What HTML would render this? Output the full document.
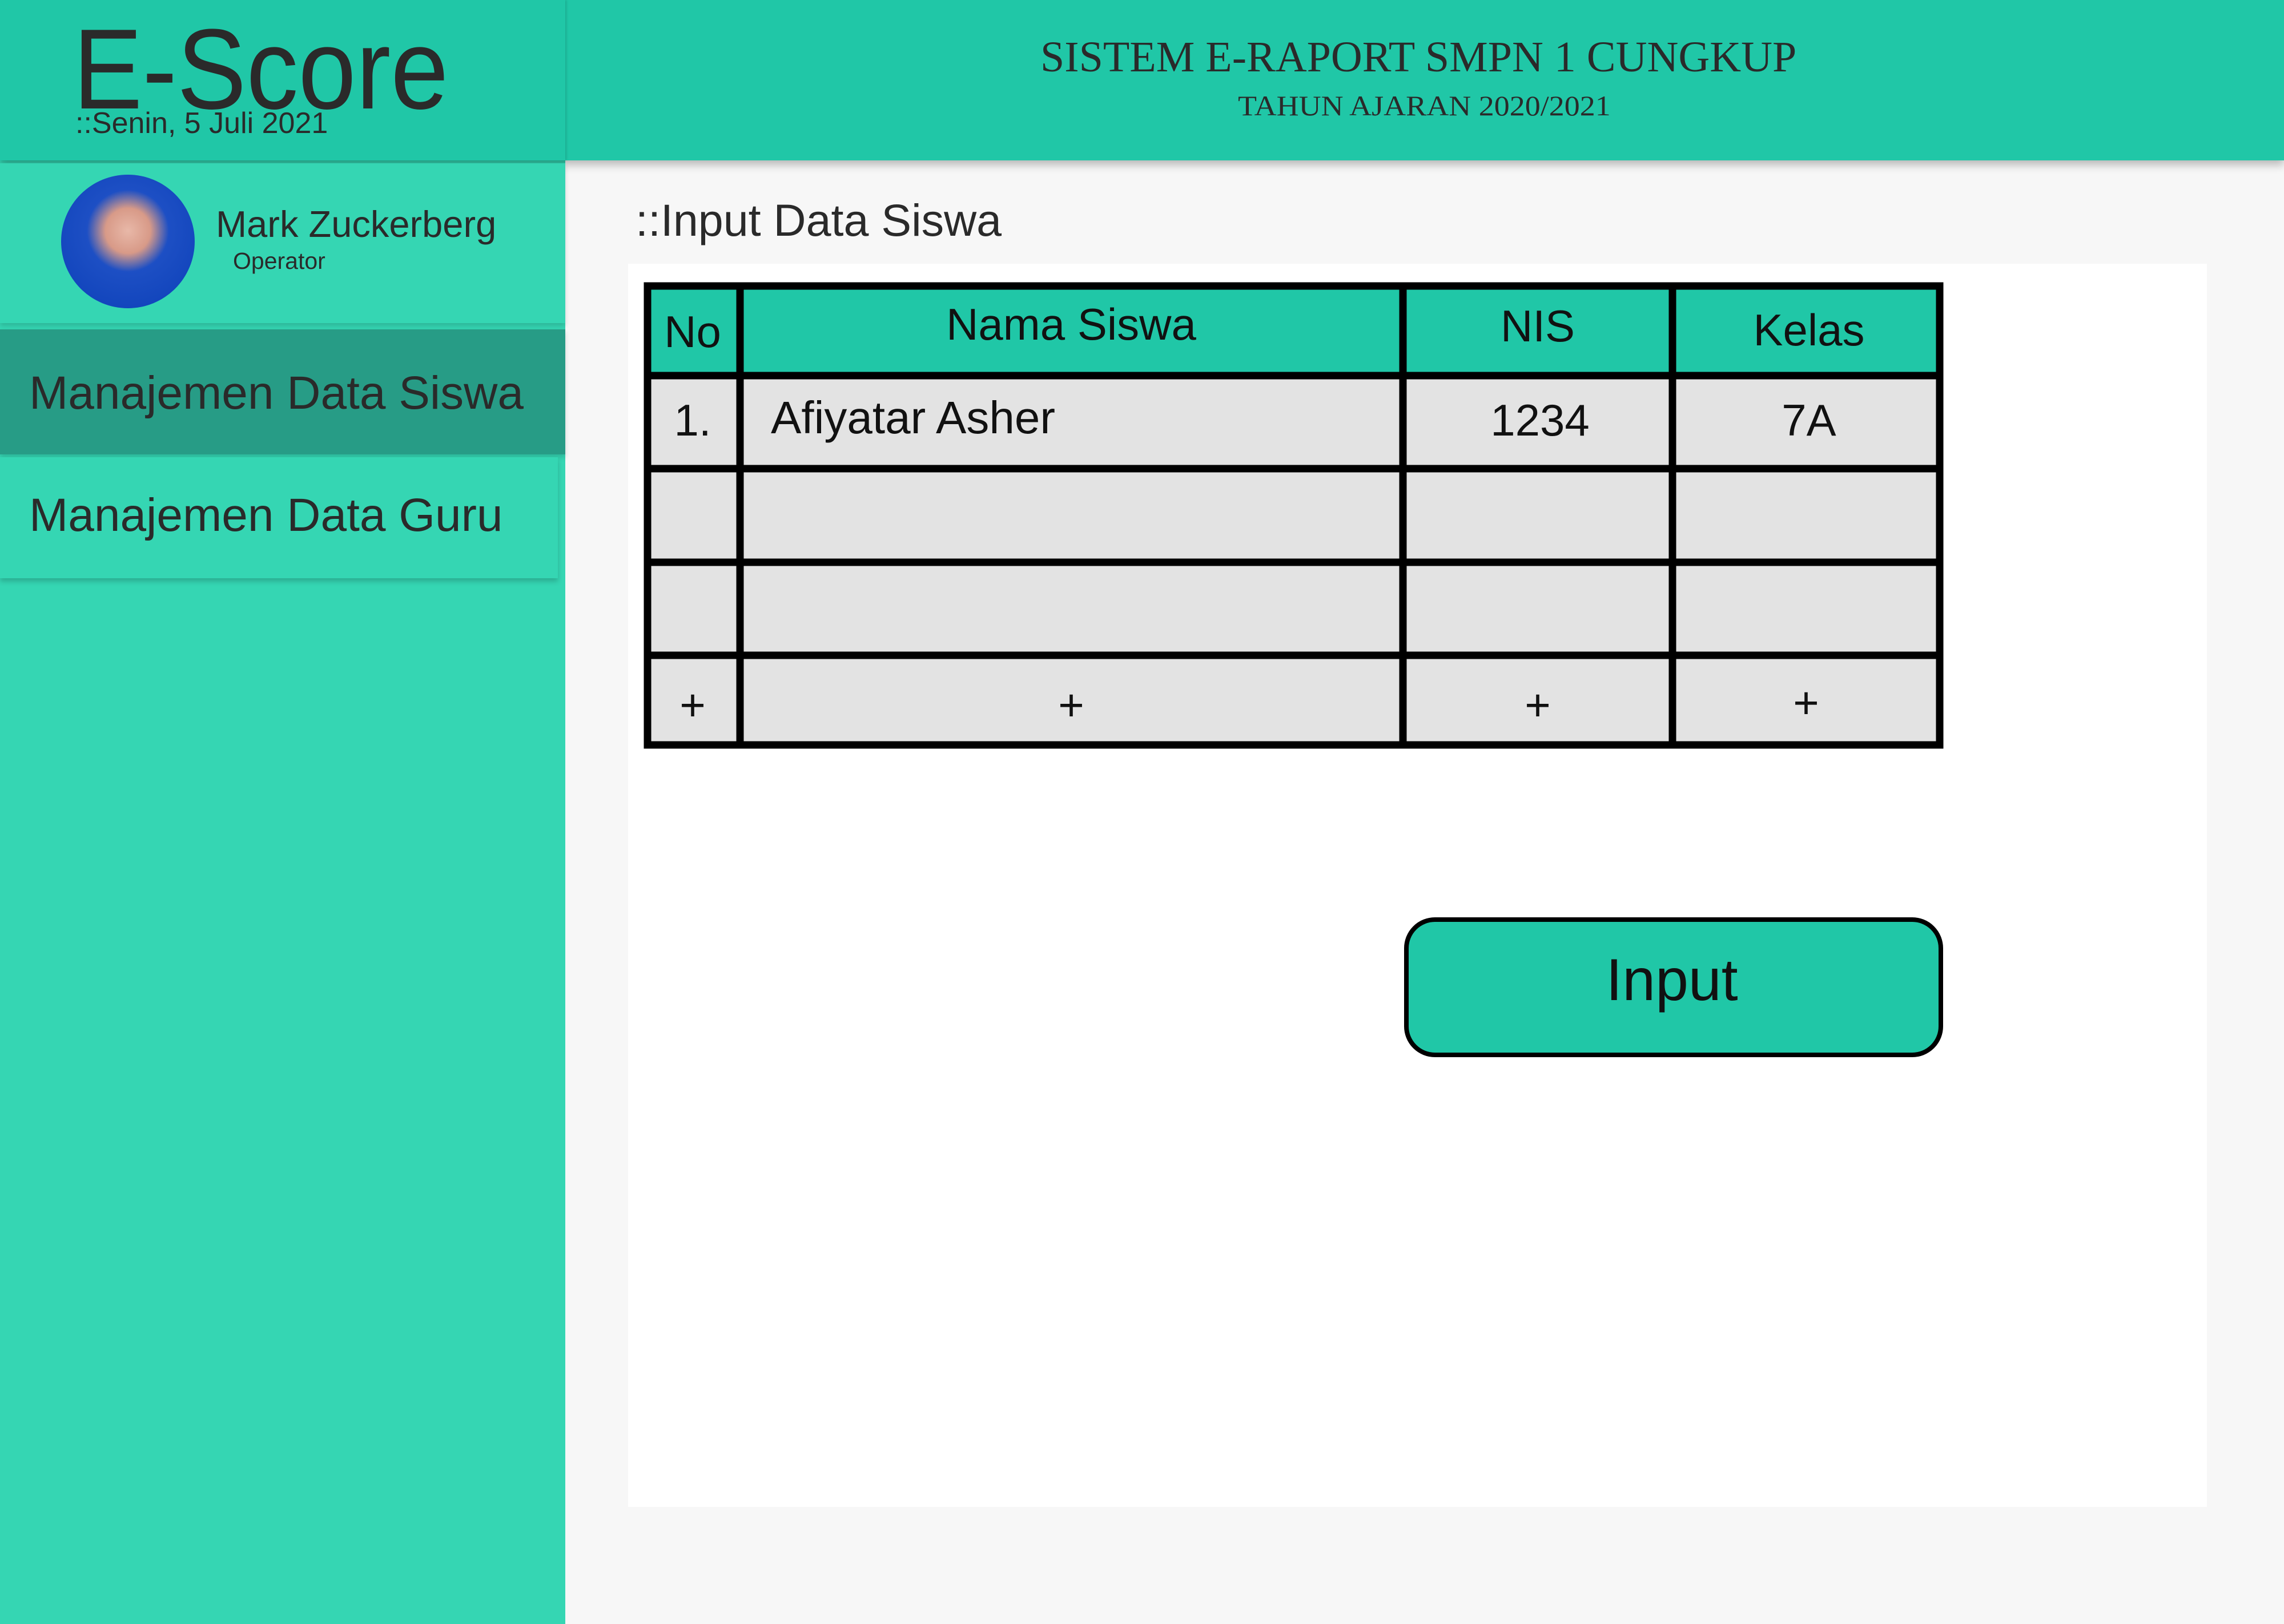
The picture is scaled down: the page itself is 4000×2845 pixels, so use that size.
<!DOCTYPE html>
<html><head><meta charset="utf-8"><style>
*{margin:0;padding:0;box-sizing:border-box}
body{width:4000px;height:2845px;background:#f7f7f7;position:relative;overflow:hidden;font-family:"Liberation Sans","DejaVu Sans",sans-serif;color:#222}
.abs{position:absolute}
#hdr{left:0;top:0;width:4000px;height:281px;background:#20c7a7;box-shadow:0 8px 14px rgba(0,0,0,.25)}
#logo{left:0;top:0;width:990px;height:281px;background:#20c7a7;box-shadow:2px 0 4px rgba(0,0,0,.15)}
#side{left:0;top:281px;width:990px;height:2564px;background:#35d6b3}
.t{white-space:nowrap;line-height:1}
</style></head><body>
<div id="side" class="abs"></div>
<div id="hdr" class="abs"></div>
<div id="logo" class="abs"></div>
<div class="abs t" style="left:128px;top:22px;font-size:200px;font-weight:300;color:#2a2a2a;transform-origin:left top;transform:scaleX(0.91)">E-Score</div>
<div class="abs t" style="left:132px;top:190px;font-size:52px;color:#2a2a2a">::Senin, 5 Juli 2021</div>
<div class="abs t" style="left:1822px;top:62px;font-family:'Liberation Serif',serif;font-size:76px;color:#2a2a2a;transform-origin:left top;transform:scaleX(1.0)">SISTEM E-RAPORT SMPN 1 CUNGKUP</div>
<div class="abs t" style="left:2168px;top:160px;font-family:'Liberation Serif',serif;font-size:50px;color:#2a2a2a;transform-origin:left top;transform:scaleX(1.08)">TAHUN AJARAN 2020/2021</div>

<div class="abs" style="left:0;top:286px;width:990px;height:280px;background:#35d6b3;box-shadow:0 5px 8px rgba(0,0,0,.15)"></div>
<div class="abs" style="left:107px;top:306px;width:234px;height:234px;border-radius:50%;background:radial-gradient(circle at 50% 42%,#e8b8a8 0,#d89a88 22%,#1d4fc4 40%,#0b3fb8 100%)"></div>
<div class="abs t" style="left:378px;top:360px;font-size:65px;color:#2a2a2a">Mark Zuckerberg</div>
<div class="abs t" style="left:408px;top:437px;font-size:41px;color:#2a2a2a">Operator</div>

<div class="abs" style="left:0;top:577px;width:990px;height:219px;background:#279c86;box-shadow:0 5px 8px rgba(0,0,0,.15)"></div>
<div class="abs t" style="left:51px;top:648px;font-size:82px;color:#2a2a2a">Manajemen Data Siswa</div>
<div class="abs" style="left:0;top:801px;width:977px;height:212px;background:#35d6b3;box-shadow:0 6px 8px rgba(0,0,0,.18)"></div>
<div class="abs t" style="left:51px;top:862px;font-size:82px;color:#2a2a2a">Manajemen Data Guru</div>

<div class="abs t" style="left:1113px;top:346px;font-size:79px;color:#2a2a2a">::Input Data Siswa</div>
<div class="abs" style="left:1100px;top:462px;width:2765px;height:2178px;background:#fff"></div>

<svg class="abs" style="left:0;top:0" width="4000" height="2845">
<g>
<rect x="1128" y="495" width="2275" height="163" fill="#20c7a7"/>
<rect x="1128" y="658" width="2275" height="653" fill="#e3e3e3"/>
<g stroke="#000" stroke-width="13" fill="none">
<rect x="1134" y="501" width="2263" height="804"/>
<line x1="1296" y1="495" x2="1296" y2="1311"/>
<line x1="2457" y1="495" x2="2457" y2="1311"/>
<line x1="2929" y1="495" x2="2929" y2="1311"/>
<line x1="1128" y1="658" x2="3403" y2="658"/>
<line x1="1128" y1="821" x2="3403" y2="821"/>
<line x1="1128" y1="985" x2="3403" y2="985"/>
<line x1="1128" y1="1148" x2="3403" y2="1148"/>
</g>
</g>
<g font-family="Liberation Sans, sans-serif" font-size="78" fill="#111" text-anchor="middle">
<text x="1213" y="608">No</text>
<text x="1876" y="595">Nama Siswa</text>
<text x="2693" y="598">NIS</text>
<text x="3168" y="605">Kelas</text>
<text x="1213" y="763">1.</text>
<text x="2697" y="763">1234</text>
<text x="3168" y="763">7A</text>
<text x="1213" y="1262">+</text>
<text x="1876" y="1262">+</text>
<text x="2693" y="1262">+</text>
<text x="3163" y="1258">+</text>
</g>
<text x="1350" y="759" font-family="Liberation Sans, sans-serif" font-size="80" fill="#111">Afiyatar Asher</text>
<rect x="2463" y="1611" width="936" height="237" rx="50" fill="#20c7a7" stroke="#000" stroke-width="8"/>
<text x="2928" y="1752" text-anchor="middle" font-family="Liberation Sans, sans-serif" font-size="104" fill="#111">Input</text>
</svg>
</body></html>
